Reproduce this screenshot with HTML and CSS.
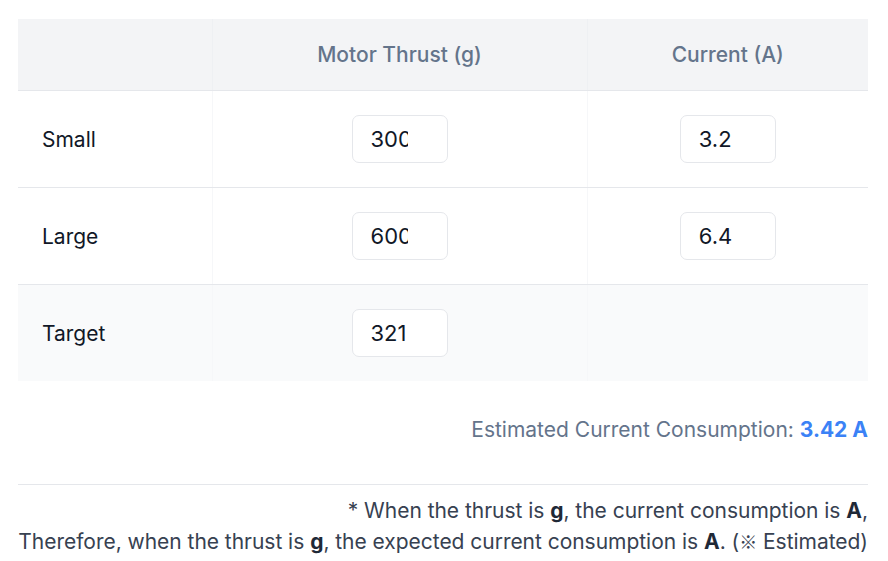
FILE: index.html
```html
<!DOCTYPE html>
<html lang="en">
<head>
  <meta charset="UTF-8">
  <meta name="viewport" content="width=device-width, initial-scale=1.0">
  <title>Motor Current Estimator</title>
  <link rel="stylesheet" href="styles.css">
</head>
<body>
  <div class="container">
    <table class="calc">
      <colgroup>
        <col class="col-label">
        <col class="col-thrust">
        <col class="col-current">
      </colgroup>
      <thead>
        <tr>
          <th></th>
          <th>Motor Thrust (g)</th>
          <th>Current (A)</th>
        </tr>
      </thead>
      <tbody>
        <tr>
          <td class="label">Small</td>
          <td><input type="number" id="smallThrust" value="300"></td>
          <td><input type="number" id="smallCurrent" value="3.2"></td>
        </tr>
        <tr>
          <td class="label">Large</td>
          <td><input type="number" id="largeThrust" value="600"></td>
          <td><input type="number" id="largeCurrent" value="6.4"></td>
        </tr>
        <tr class="target">
          <td class="label">Target</td>
          <td><input type="number" id="targetThrust" value="321"></td>
          <td></td>
        </tr>
      </tbody>
    </table>

    <div class="result">Estimated Current Consumption: <span class="value" id="result">3.42 A</span></div>

    <div class="note">
      <p>* When the thrust is <b>g</b>, the current consumption is <b>A</b>,</p>
      <p>Therefore, when the thrust is <b>g</b>, the expected current consumption is <b>A</b>. (<span class="cjk">※</span> Estimated)</p>
    </div>
  </div>

  <script>
    const ids = ["smallThrust", "smallCurrent", "largeThrust", "largeCurrent", "targetThrust"];
    const resultEl = document.getElementById("result");

    function calculate() {
      const [t1, c1, t2, c2, t] = ids.map(id => parseFloat(document.getElementById(id).value));
      if ([t1, c1, t2, c2, t].some(isNaN) || t1 === t2) {
        resultEl.textContent = "- A";
        return;
      }
      const current = c1 + (t - t1) * (c2 - c1) / (t2 - t1);
      resultEl.textContent = current.toFixed(2) + " A";
    }

    ids.forEach(id => document.getElementById(id).addEventListener("input", calculate));
    calculate();
  </script>
</body>
</html>
```

FILE: styles.css
```css
body {
  font-family: Inter, "Noto Sans", sans-serif;
  margin: 0;
  padding: 19px 20px 0 18px;
  color: #111827;
  background: white;
  font-size: 21px;
}
.calc {
  width: 850px;
  border-collapse: collapse;
  table-layout: fixed;
  font-size: 21px;
}
.col-label {
  width: 194px;
}
.col-thrust {
  width: 375px;
}
.calc th {
  height: 71px;
  padding: 0;
  background-color: #f3f4f6;
  color: #64748b;
  font-weight: 500;
  border-bottom: 1px solid #e5e7eb;
  border-left: 1px solid #eef0f3;
}
.calc th:first-child {
  border-left: none;
}
.calc td {
  height: 96px;
  padding: 0;
  text-align: center;
  border-bottom: 1px solid #e5e7eb;
  border-left: 1px solid #f6f7f9;
}
.calc td:first-child {
  border-left: none;
}
.calc td.label {
  text-align: left;
  padding-left: 24px;
}
.calc tr.target td {
  background-color: #f9fafb;
  border-bottom: none;
}
input {
  width: 96px;
  height: 48px;
  box-sizing: border-box;
  padding: 0 24px 0 18px;
  font-family: inherit;
  font-size: 22px;
  color: #111827;
  background: white;
  border: 1px solid #e5e7eb;
  border-radius: 7px;
  vertical-align: middle;
}
.result {
  text-align: right;
  color: #64748b;
  line-height: 30px;
  margin-top: 34px;
  padding-bottom: 39px;
  border-bottom: 1px solid #e5e7eb;
}
.value {
  color: #3b82f6;
  font-weight: 700;
}
.note {
  text-align: right;
  color: #374151;
  line-height: 30px;
  padding-top: 11px;
  white-space: nowrap;
  letter-spacing: -0.03px;
}
.note p {
  margin: 0;
}
.note b {
  color: #1f2937;
}
.cjk {
  font-family: "Noto Sans CJK KR", sans-serif;
  font-size: 18px;
  font-weight: 300;
}
```
